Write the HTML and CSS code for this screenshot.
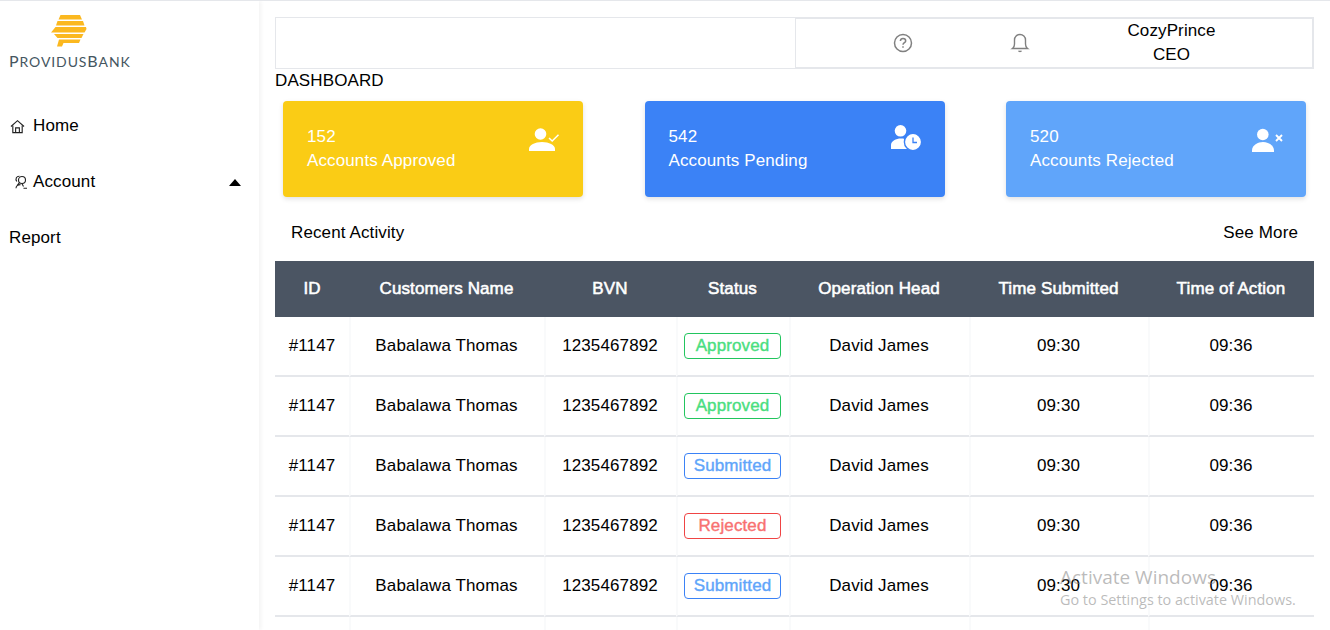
FILE: index.html
```html
<!DOCTYPE html>
<html lang="en">
<head>
<meta charset="utf-8">
<title>Providus Bank Dashboard</title>
<link rel="stylesheet" href="styles.css">
</head>
<body>
<div class="app">
  <aside class="sidebar">
    <div class="logo">
      <svg class="logo-mark" width="36" height="32" viewBox="0 0 36 32">
        <polygon fill="#fbb81f" points="9.5,0 29,0 31,4.5 7.5,4.5"/>
        <polygon fill="#fbb81f" points="6.5,6 32,6 33.5,10.5 5,10.5"/>
        <polygon fill="#fbb81f" points="4.5,12 35,12 35.5,14 33.5,17.5 0,17.5"/>
        <polygon fill="#fbb81f" points="3,19 32.5,19 30.5,23 6.5,23"/>
        <polygon fill="#fbb81f" points="8,24.5 29.5,24.5 28,28 12.5,28 11,31.5 6,31.5"/>
      </svg>
      <div class="logo-text"><span class="big">P</span>ROVIDUS<span class="big">B</span>ANK</div>
    </div>
    <nav class="nav">
      <div class="nav-item">
        <svg class="nav-icon" width="15" height="15" viewBox="0 0 16 16" fill="none" stroke="#222" stroke-width="1.2"><path d="M1 8 8 1.8 15 8"/><path d="M3 6.8V14.5H13V6.8"/><path d="M6 14.5V9.5H10V14.5"/></svg>
        <span>Home</span>
      </div>
      <div class="nav-item">
        <svg class="nav-icon acct" width="14" height="14" viewBox="0 0 14 14" fill="none" stroke="#222" stroke-width="1.1"><circle cx="8" cy="5" r="3.5"/><path d="M5.5 1.2C2.5 1 1 4 2.8 6.5M5.5 7.6 3 10.5M2 13.2C2 10.8 4.5 9.6 6.5 9.6M8 8.8 9.5 11.5M9.5 13.3H13"/></svg>
        <span>Account</span>
        <span class="caret"></span>
      </div>
      <div class="nav-item plain"><span>Report</span></div>
    </nav>
  </aside>
  <main class="main">
    <header class="topbar">
      <div class="topbar-left"></div>
      <div class="topbar-right">
        <div class="top-cell">
          <svg width="20" height="20" viewBox="0 0 20 20" fill="none" stroke="#808080" stroke-width="1.5"><circle cx="10" cy="10" r="8.5"/><path d="M7.4 8C7.5 6.3 8.7 5.6 10 5.6C11.5 5.6 12.7 6.5 12.7 7.9C12.7 9.6 10 9.8 10 11.8"/><path d="M10 13.2V14.8"/></svg>
        </div>
        <div class="top-cell">
          <svg width="20" height="20" viewBox="0 0 20 20" fill="none" stroke="#808080" stroke-width="1.4"><path d="M2.5 15.5C4 14.5 4.5 13 4.5 11V7C4.5 3.8 7 1.5 10 1.5S15.5 3.8 15.5 7V11C15.5 13 16 14.5 17.5 15.5Z"/><path d="M8.5 17.8C9 18.8 11 18.8 11.5 17.8"/></svg>
        </div>
        <div class="user">
          <div>CozyPrince</div>
          <div>CEO</div>
        </div>
      </div>
    </header>
    <div class="page-title">DASHBOARD</div>
    <section class="cards">
      <div class="card yellow">
        <div><div>152</div><div>Accounts Approved</div></div>
        <svg class="card-icon" width="31" height="30" viewBox="0 0 31 30"><circle cx="11.5" cy="10" r="5.8" fill="#fff"/><path d="M0 27V25C0 21 6 18 13 18S26 21 26 25V27Z" fill="#fff"/><path d="M20 14 23.2 17 29.5 10.8" fill="none" stroke="#fff" stroke-width="1.5"/></svg>
      </div>
      <div class="card blue">
        <div><div>542</div><div>Accounts Pending</div></div>
        <svg class="card-icon" width="31" height="30" viewBox="0 0 31 30"><circle cx="9.5" cy="6.8" r="5.8" fill="#fff"/><path d="M0 25V21C0 17 5 14.5 10 14.5S20 17 20 21V25Z" fill="#fff"/><circle cx="22" cy="18" r="8.6" fill="#fff" stroke="#3b82f6" stroke-width="1.4"/><path d="M22 13.5V18.5H26" fill="none" stroke="#3b82f6" stroke-width="1.3"/></svg>
      </div>
      <div class="card light">
        <div><div>520</div><div>Accounts Rejected</div></div>
        <svg class="card-icon" width="31" height="30" viewBox="0 0 31 30"><circle cx="10.8" cy="10.5" r="5.8" fill="#fff"/><path d="M0 28V26.5C0 21 6 18 11 18S22 21 22 26.5V28Z" fill="#fff"/><path d="M24 11 30 17M30 11 24 17" stroke="#fff" stroke-width="1.9"/></svg>
      </div>
    </section>
    <div class="section-head">
      <span>Recent Activity</span>
      <span>See More</span>
    </div>
    <table class="activity">
      <colgroup>
        <col class="c-id"><col class="c-name"><col class="c-bvn"><col class="c-status"><col class="c-head"><col class="c-time"><col class="c-action">
      </colgroup>
      <thead>
        <tr><th>ID</th><th>Customers Name</th><th>BVN</th><th>Status</th><th>Operation Head</th><th>Time Submitted</th><th>Time of Action</th></tr>
      </thead>
      <tbody>
        <tr><td>#1147</td><td>Babalawa Thomas</td><td>1235467892</td><td><span class="badge approved">Approved</span></td><td>David James</td><td>09:30</td><td>09:36</td></tr>
        <tr><td>#1147</td><td>Babalawa Thomas</td><td>1235467892</td><td><span class="badge approved">Approved</span></td><td>David James</td><td>09:30</td><td>09:36</td></tr>
        <tr><td>#1147</td><td>Babalawa Thomas</td><td>1235467892</td><td><span class="badge submitted">Submitted</span></td><td>David James</td><td>09:30</td><td>09:36</td></tr>
        <tr><td>#1147</td><td>Babalawa Thomas</td><td>1235467892</td><td><span class="badge rejected">Rejected</span></td><td>David James</td><td>09:30</td><td>09:36</td></tr>
        <tr><td>#1147</td><td>Babalawa Thomas</td><td>1235467892</td><td><span class="badge submitted">Submitted</span></td><td>David James</td><td>09:30</td><td>09:36</td></tr>
        <tr><td></td><td></td><td></td><td></td><td></td><td></td><td></td></tr>
      </tbody>
    </table>
  </main>
</div>
<div class="watermark">
  <div class="wm-title">Activate Windows</div>
  <div class="wm-sub">Go to Settings to activate Windows.</div>
</div>
</body>
</html>
```

FILE: styles.css
```css
* { box-sizing: border-box; }

html, body {
  height: 100%;
  margin: 0;
  overflow: hidden;
}

body {
  background: #fff;
  color: #000;
  font-family: "Liberation Sans", Arial, sans-serif;
  font-size: 17px;
  line-height: 24px;
  letter-spacing: 0.12px;
  border-top: 1px solid #e5e7eb;
}

.app {
  display: flex;
  height: 100%;
}

.sidebar {
  flex: 0 0 259px;
  box-shadow: 2px 0 4px rgba(0, 0, 0, 0.05);
}

.logo {
  height: 97px;
  padding: 14px 0 0 9px;
  display: flex;
  flex-direction: column;
  align-items: flex-start;
}

.logo-mark { margin-left: 42px; }

.logo-text {
  margin-top: 6px;
  font-family: "Lato", sans-serif;
  font-size: 14px;
  line-height: 16px;
  letter-spacing: 0.9px;
  color: #45565f;
  white-space: nowrap;
}

.logo-text .big { font-size: 16px; }

.nav-item {
  height: 56px;
  display: flex;
  align-items: center;
  padding-left: 9px;
  padding-right: 18px;
}

.nav-icon { margin-left: 1px; margin-right: 8px; }

.nav-icon.acct {
  margin-left: 5px;
  margin-right: 5px;
}

.caret {
  margin-left: auto;
  border-left: 6px solid transparent;
  border-right: 6px solid transparent;
  border-bottom: 7px solid #000;
}

.main {
  flex: 1;
  min-width: 0;
  padding: 16px 16px 0;
}

.topbar {
  display: flex;
  height: 52px;
}

.topbar-left {
  flex: 0 0 520px;
  border: 1px solid #e5e7eb;
  border-right: 0;
}

.topbar-right {
  flex: 1;
  display: flex;
  align-items: center;
  padding: 0 47px 0 48px;
  border: 2px solid #e5e7eb;
  border-left-width: 1px;
}

.top-cell {
  flex: 0 0 117px;
  display: flex;
  justify-content: center;
}

.user {
  flex: 1;
  text-align: center;
}

.cards {
  display: flex;
  justify-content: space-between;
  padding: 8px 8px 0;
}

.card {
  width: 300px;
  height: 96px;
  padding: 24px;
  display: flex;
  justify-content: space-between;
  align-items: flex-start;
  color: #fff;
  border-radius: 4px;
  box-shadow: 0 2px 5px rgba(0, 0, 0, 0.12);
}

.card.yellow { background: #facc15; }
.card.blue { background: #3b82f6; }
.card.light { background: #60a5fa; }

.card-icon { margin-top: -1px; margin-right: -1px; }

.section-head {
  display: flex;
  justify-content: space-between;
  align-items: center;
  height: 64px;
  padding: 8px 16px 0;
}

.activity {
  width: 1039px;
  table-layout: fixed;
  border-collapse: separate;
  border-spacing: 0;
  text-align: center;
}

.c-id { width: 74px; }
.c-name { width: 195px; }
.c-bvn { width: 132px; }
.c-status { width: 113px; }
.c-head { width: 180px; }
.c-time { width: 179px; }
.c-action { width: 166px; }

.activity th {
  height: 56px;
  padding: 0;
  background: #4b5563;
  color: #fff;
  font-weight: 400;
  -webkit-text-stroke: 0.55px #fff;
  white-space: nowrap;
}

.activity td {
  height: 60px;
  padding: 0;
  border-bottom: 2px solid #e5e7eb;
  white-space: nowrap;
}

.activity td + td {
  padding-right: 2px;
  border-left: 2px solid #f9fafb;
}

.badge {
  display: inline-block;
  width: 97px;
  height: 26px;
  line-height: 24px;
  border: 1px solid;
  border-radius: 4px;
  vertical-align: middle;
  -webkit-text-stroke: 0.4px currentColor;
}

.badge.approved { border-color: #22c55e; color: #4ade80; }
.badge.submitted { border-color: #3b82f6; color: #60a5fa; }
.badge.rejected { border-color: #ef4444; color: #f87171; }

.watermark {
  position: absolute;
  left: 1060px;
  top: 565px;
  color: rgba(120, 120, 120, 0.5);
  font-family: "Open Sans", sans-serif;
  letter-spacing: 0;
  pointer-events: none;
}

.wm-title { font-size: 19px; line-height: 25px; }
.wm-sub { font-size: 14.4px; line-height: 20px; }
```
